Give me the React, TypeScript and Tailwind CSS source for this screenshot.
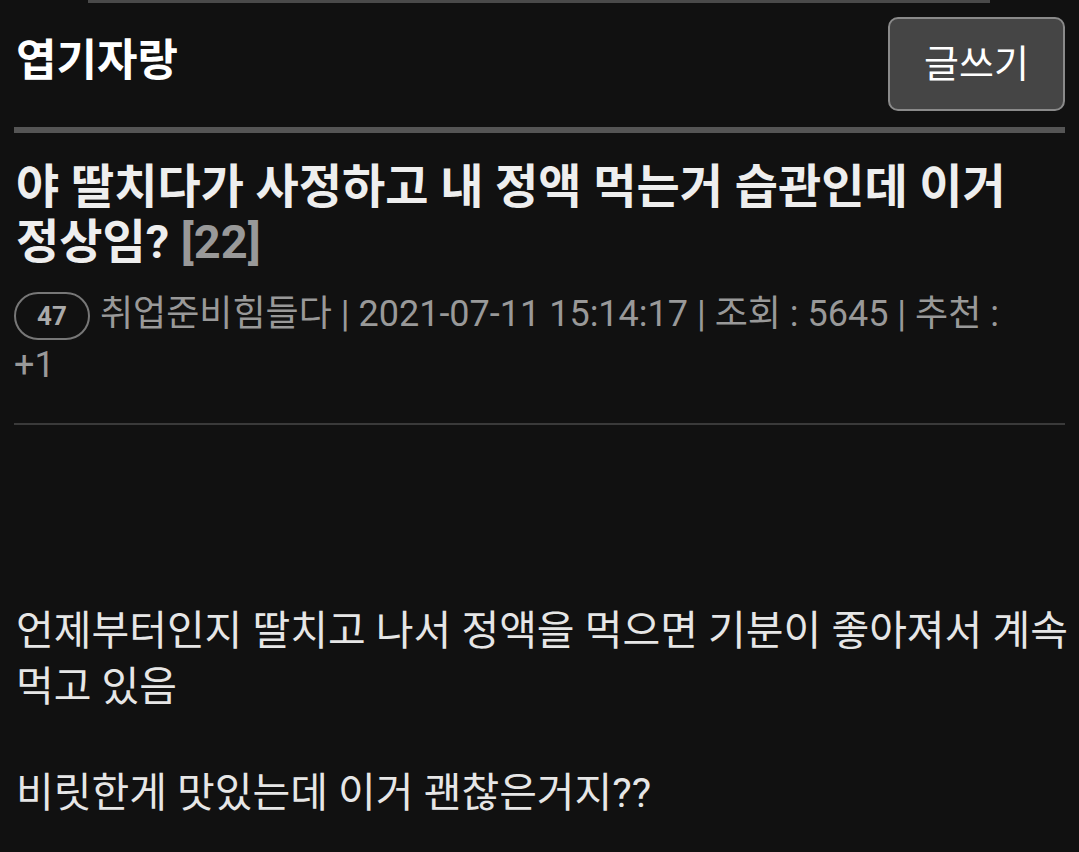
export default function App() {
  return (
    <div
      className="min-h-[852px] w-full break-keep bg-[#111111] text-[#e8e8e8]"
      style={{ fontFamily: "Roboto, 'Noto Sans CJK KR', sans-serif" }}
    >
      <div className="ml-[88px] mr-[89px] h-[3px] bg-[#4a4a4a]" />
      <div className="flex items-center justify-between pl-4 pr-[14px] pt-[14px]">
        <h1 className="-mt-[6px] text-[44px] font-bold text-white">엽기자랑</h1>
        <button className="h-[94px] w-[177px] rounded-[10px] border-2 border-[#8a8a8a] bg-[#454545] text-[38px] text-white">
          글쓰기
        </button>
      </div>
      <div className="mx-[14px] mt-[16px] h-[6px] bg-[#555555]" />
      <h2 className="mt-[26px] pl-4 pr-2 text-[47px] font-bold leading-[55px] text-[#eeeeee]">
        야 딸치다가 사정하고 내 정액 먹는거 습관인데 이거 정상임? <span className="text-[#999999]">[22]</span>
      </h2>
      <div className="mt-[20px] pl-[14px] pr-[40px] text-[36px] leading-[50px] text-[#999999]">
        <span className="mr-[10px] inline-flex h-[48px] w-[76px] items-center justify-center rounded-full border-2 border-[#777777] align-middle text-[26px] font-bold leading-none text-[#aaaaaa]">
          47
        </span>
        취업준비힘들다 | 2021-07-11 15:14:17 | 조회 : 5645 | 추천 : +1
      </div>
      <div className="mx-[14px] mt-[33px] h-[2px] bg-[#3a3a3a]" />
      <div className="pl-4 pr-2 pt-[178px] text-[41px] leading-[56px] text-[#e6e6e6]">
        <p>언제부터인지 딸치고 나서 정액을 먹으면 기분이 좋아져서 계속 먹고 있음</p>
        <p className="mt-[50px]">비릿한게 맛있는데 이거 괜찮은거지??</p>
      </div>
    </div>
  );
}
